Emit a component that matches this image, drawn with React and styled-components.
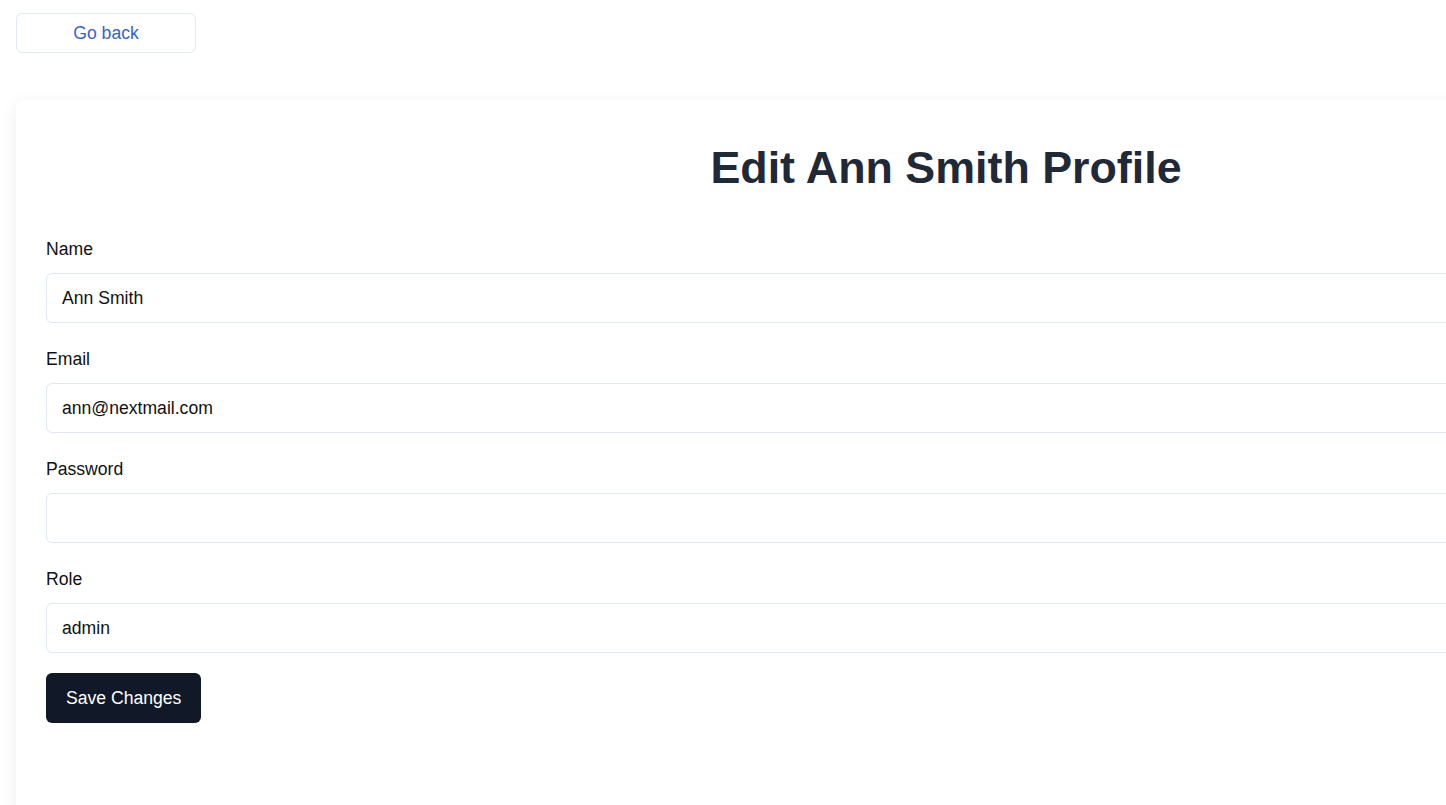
import React from "react";
import styled, { createGlobalStyle } from "styled-components";

const GlobalStyle = createGlobalStyle`
  html, body {
    margin: 0;
    padding: 0;
    background: #ffffff;
    overflow: hidden;
  }
  body {
    font-family: "Liberation Sans", Arial, sans-serif;
  }
  * { box-sizing: border-box; }
`;

const Page = styled.div`
  padding: 13px 16px 0;
  width: 1446px;
  height: 805px;
  overflow: hidden;
`;

const BackButton = styled.button`
  display: block;
  width: 180px;
  height: 40px;
  background: #ffffff;
  border: 1px solid #e2e8f0;
  border-radius: 6px;
  color: #3563d1;
  font-family: "Liberation Sans", Arial, sans-serif;
  font-size: 17.6px;
  cursor: pointer;
`;

const Card = styled.div`
  margin-top: 47px;
  width: 1860px;
  padding: 30px 30px 120px;
  background: #ffffff;
  border-radius: 8px;
  box-shadow: 0 4px 18px rgba(0, 0, 0, 0.07);
`;

const Title = styled.h1`
  margin: 12px 0 40px;
  text-align: center;
  font-size: 44.8px;
  font-weight: 700;
  color: #1f2937;
  line-height: normal;
`;

const Form = styled.form`
  display: flex;
  flex-direction: column;
  gap: 20px;
  align-items: flex-start;
`;

const Field = styled.div`
  display: flex;
  flex-direction: column;
  gap: 14px;
  width: 100%;
  padding-top: 6px;
`;

const Label = styled.label`
  font-size: 17.6px;
  color: #111111;
  line-height: 20px;
`;

const Input = styled.input`
  width: 100%;
  height: 50px;
  padding: 0 15px;
  border: 1px solid #e2e8f0;
  border-radius: 6px;
  font-family: "Liberation Sans", Arial, sans-serif;
  font-size: 17.6px;
  color: #111111;
  background: #ffffff;
  outline: none;
`;

const SaveButton = styled.button`
  height: 50px;
  padding: 0 20px;
  background: #111827;
  color: #ffffff;
  border: none;
  border-radius: 6px;
  font-family: "Liberation Sans", Arial, sans-serif;
  font-size: 17.6px;
  cursor: pointer;
`;

const fields = [
  { id: "name", label: "Name", value: "Ann Smith", type: "text" },
  { id: "email", label: "Email", value: "ann@nextmail.com", type: "email" },
  { id: "password", label: "Password", value: "", type: "password" },
  { id: "role", label: "Role", value: "admin", type: "text" },
];

export default function App() {
  return (
    <>
      <GlobalStyle />
      <Page>
        <BackButton type="button">Go back</BackButton>
        <Card>
          <Title>Edit Ann Smith Profile</Title>
          <Form onSubmit={(e) => e.preventDefault()}>
            {fields.map((f) => (
              <Field key={f.id}>
                <Label htmlFor={f.id}>{f.label}</Label>
                <Input id={f.id} type={f.type} defaultValue={f.value} />
              </Field>
            ))}
            <SaveButton type="submit">Save Changes</SaveButton>
          </Form>
        </Card>
      </Page>
    </>
  );
}
